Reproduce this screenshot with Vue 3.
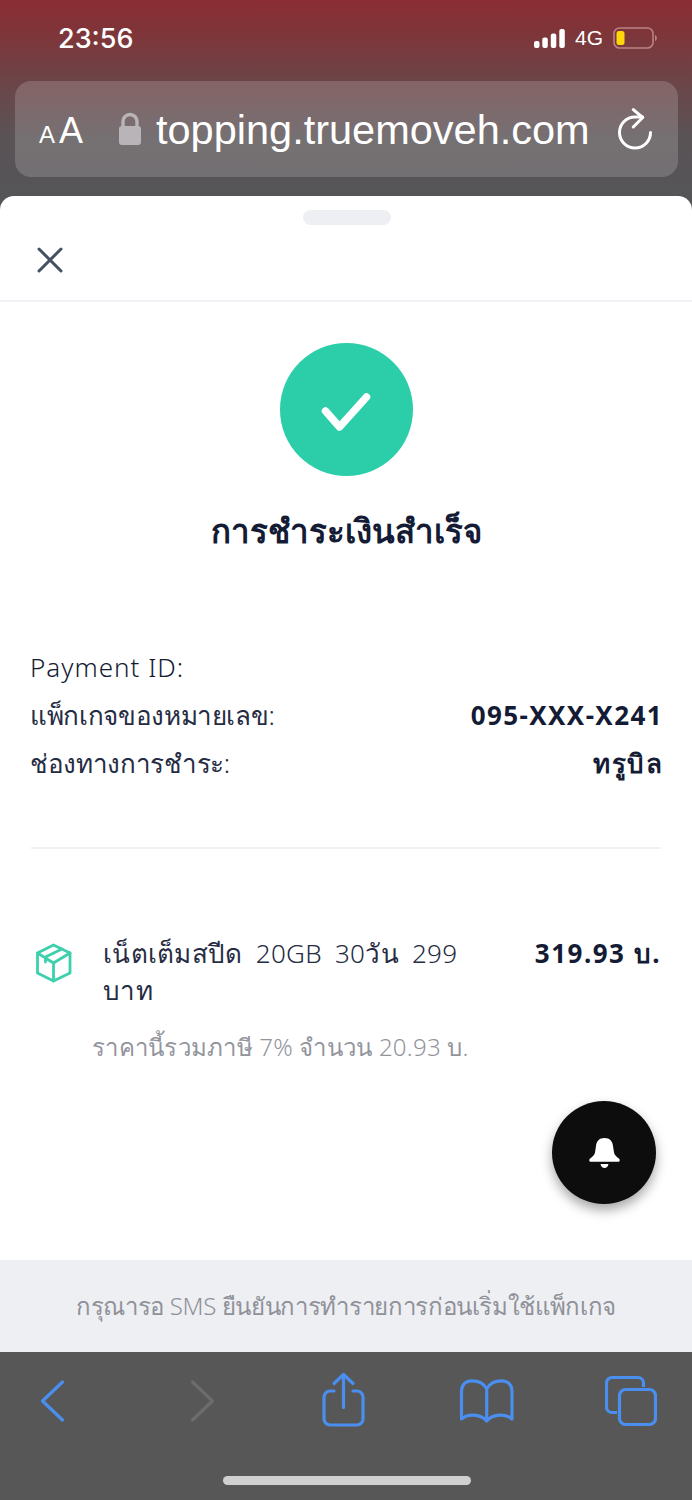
<script setup>
const rows = [
  { label: "Payment ID:", value: "" },
  { label: "แพ็กเกจของหมายเลข:", value: "095-XXX-X241", thai: true },
  { label: "ช่องทางการชำระ:", value: "ทรูบิล", thai: true },
];
</script>

<template>
  <div class="phone">
    <header class="top">
      <div class="status">
        <span class="time">23:56</span>
        <div class="status-right">
          <svg width="31" height="19" viewBox="0 0 31 19" fill="#fff">
            <rect x="0" y="12" width="5.500" height="7" rx="2" />
            <rect x="8.300" y="8.500" width="5.500" height="10.500" rx="2" />
            <rect x="16.800" y="4.500" width="5.500" height="14.500" rx="2" />
            <rect x="25.300" y="0" width="5.500" height="19" rx="2" />
          </svg>
          <span class="net">4G</span>
          <svg width="44" height="22" viewBox="0 0 44 22">
            <rect x="1" y="1" width="39" height="20" rx="5.500" fill="none" stroke="#b98286" stroke-width="1.600" />
            <rect x="3.500" y="4" width="8" height="14" rx="2.500" fill="#ffd60a" />
            <path d="M42 8c1.400.5 1.800 1.800 1.800 3s-.4 2.500-1.800 3z" fill="#b98286" />
          </svg>
        </div>
      </div>
      <div class="url-bar">
        <span class="aa"><small>A</small>A</span>
        <svg class="lock" width="24" height="34" viewBox="0 0 24 34">
          <path d="M5 15V9.500a7 7 0 0 1 14 0V15" fill="none" stroke="#b9b4b8" stroke-width="3.400" />
          <rect x="1" y="14" width="22" height="19" rx="3" fill="#b9b4b8" />
        </svg>
        <span class="url">topping.truemoveh.com</span>
        <svg class="reload" width="36" height="42" viewBox="0 0 36 42" fill="none" stroke="#fff" stroke-width="3" stroke-linecap="round" stroke-linejoin="round">
          <path d="M25.700 9H18A15.500 15.500 0 1 0 33.500 24.500" />
          <path d="M16.300 1.700L25.700 9.500 16.300 19" />
        </svg>
      </div>
    </header>

    <main class="sheet">
      <div class="handle"></div>
      <div class="sheet-head">
        <svg width="26" height="26" viewBox="0 0 26 26" fill="none" stroke="#475063" stroke-width="3" stroke-linecap="round">
          <path d="M2 2l22 22M24 2L2 24" />
        </svg>
      </div>

      <div class="body">
        <div class="check">
          <svg width="50" height="42" viewBox="0 0 50 42" fill="none" stroke="#fff" stroke-width="7.500" stroke-linecap="round" stroke-linejoin="round">
            <path d="M4.500 22l14 16L45.500 8" />
          </svg>
        </div>
        <h1 class="title">การชำระเงินสำเร็จ</h1>

        <div class="info">
          <div v-for="row in rows" :key="row.label" class="info-row">
            <span class="label" :class="{ thai: row.thai }">{{ row.label }}</span>
            <span class="value">{{ row.value }}</span>
          </div>
        </div>

        <div class="rule"></div>

        <div class="item">
          <svg class="box" width="36" height="40" viewBox="0 0 36 40" fill="none" stroke="#3ed0ad" stroke-width="2.800" stroke-linecap="round" stroke-linejoin="round">
            <path d="M17.500 2L34 10v20l-16.500 8-16-8V10z" />
            <path d="M1.500 10l16 10L34 10M17.500 20v18M26 6L9.500 14v5" />
          </svg>
          <div class="item-name">เน็ตเต็มสปีด 20GB 30วัน 299 บาท</div>
          <div class="item-price">319.93 บ.</div>
        </div>
        <p class="vat">ราคานี้รวมภาษี 7% จำนวน 20.93 บ.</p>

        <button class="fab">
          <svg width="31" height="32" viewBox="0 0 31 32" fill="#fff">
            <path d="M15.500 1C10 1 7.500 4.500 7 9L6 15.500C5.500 18.500 3 20 .8 21.800-.2 23 .3 24.800 1.500 24.800H29.500C30.700 24.800 31.200 23 30.200 21.800 28 20 25.500 18.500 25 15.500L24 9C23.500 4.500 21 1 15.500 1z" />
            <path d="M11.500 27h8c-.5 2.500-2 4-4 4s-3.500-1.500-4-4z" />
          </svg>
        </button>
      </div>

      <div class="notice">กรุณารอ SMS ยืนยันการทำรายการก่อนเริ่มใช้แพ็กเกจ</div>
    </main>

    <footer class="toolbar">
      <div class="tools">
        <svg width="26" height="44" viewBox="0 0 26 44" fill="none" stroke="#4a8fef" stroke-width="3.200" stroke-linecap="round" stroke-linejoin="round">
          <path d="M23.500 3L3.500 22l20 19" />
        </svg>
        <svg width="26" height="44" viewBox="0 0 26 44" fill="none" stroke="#6c6c6c" stroke-width="3.200" stroke-linecap="round" stroke-linejoin="round">
          <path d="M3.500 3l20 19-20 19" />
        </svg>
        <svg width="43" height="58" viewBox="0 0 43 58" fill="none" stroke="#4a8fef" stroke-width="3.200" stroke-linecap="round" stroke-linejoin="round">
          <path d="M12 19H8a6 6 0 0 0-6 6v22a6 6 0 0 0 6 6h27a6 6 0 0 0 6-6V25a6 6 0 0 0-6-6h-4" />
          <path d="M21.500 35.500V2.500M12 11.500l9.500-9 9.500 9" />
        </svg>
        <svg width="56" height="46" viewBox="0 0 56 46" fill="none" stroke="#4a8fef" stroke-width="3.200" stroke-linecap="round" stroke-linejoin="round">
          <path d="M27.700 11C25 5.500 19 2.800 13 2.800 6.500 2.800 2.500 7 2.500 13v28c5.500-5 18.500-6 25.200 2 6.800-8 19.800-7 25.300-2V13c0-6-4-10.200-10.500-10.200-6 0-12 2.700-14.800 8.200zM27.700 11v32" />
        </svg>
        <svg width="52" height="52" viewBox="0 0 52 52" fill="none" stroke="#4a8fef" stroke-width="3.200" stroke-linejoin="round">
          <path d="M12 37.500H7A5.500 5.500 0 0 1 1.500 32V8A5.500 5.500 0 0 1 7 2.500h26A5.500 5.500 0 0 1 38.500 8v4" />
          <rect x="14.500" y="14.500" width="36" height="35" rx="6" />
        </svg>
      </div>
      <div class="home-bar"></div>
    </footer>
  </div>
</template>

<style scoped>
.phone {
  width: 692px;
  height: 1500px;
  display: flex;
  flex-direction: column;
  overflow: hidden;
  font-family: "Noto Sans", "Open Sans", "DejaVu Sans", sans-serif;
  color: #141b34;
  background: #555;
}
.top {
  height: 196px;
  flex-shrink: 0;
  box-sizing: border-box;
  padding: 0 14px 0 15px;
  background: linear-gradient(180deg, #8a2e34 0%, #803438 15%, #6d4447 40%, #5a5356 70%, #555557 100%);
  color: #fff;
}
.status {
  height: 81px;
  display: flex;
  justify-content: space-between;
  align-items: center;
  padding: 0 21px 5px 43px;
  box-sizing: border-box;
}
.time {
  font: 500 27px "Inter", "Liberation Sans", sans-serif;
}
.status-right {
  display: flex;
  align-items: center;
  gap: 10px;
}
.net {
  font: 500 21px "Liberation Sans", sans-serif;
}
.url-bar {
  height: 96px;
  border-radius: 16px;
  background: rgba(255, 255, 255, 0.17);
  display: flex;
  align-items: center;
  padding: 0 25px 0 24px;
}
.aa {
  font: 400 36px "Liberation Sans", sans-serif;
  width: 79px;
  flex-shrink: 0;
  margin-top: 3px;
}
.aa small {
  font-size: 24px;
  margin-right: 4px;
}
.lock {
  flex-shrink: 0;
  margin-right: 14px;
}
.url {
  font: 400 41.500px "Liberation Sans", sans-serif;
  flex: 1;
  white-space: nowrap;
  margin-top: 2px;
}
.reload {
  flex-shrink: 0;
}
.sheet {
  flex: 1;
  background: #fff;
  border-radius: 14px 14px 0 0;
  display: flex;
  flex-direction: column;
  min-height: 0;
}
.handle {
  width: 88px;
  height: 15px;
  border-radius: 8px;
  background: #eeeff3;
  margin: 14px 0 0 303px;
}
.sheet-head {
  height: 77px;
  box-sizing: border-box;
  border-bottom: 2px solid #f0f1f4;
  padding: 22px 0 0 37px;
}
.body {
  flex: 1;
  position: relative;
  padding: 41px 31px 0;
}
.check {
  width: 133px;
  height: 133px;
  border-radius: 50%;
  background: #2bcea8;
  margin: 0 auto;
  display: flex;
  align-items: center;
  justify-content: center;
}
.title {
  margin: 31px 0 0;
  font-size: 33px;
  line-height: 48px;
  font-weight: 800;
  text-align: center;
}
.info {
  margin: 88px -2px 0 -1px;
  font-size: 26px;
}
.info-row {
  height: 48px;
  display: flex;
  align-items: center;
  justify-content: space-between;
}
.label {
  font-weight: 300;
  letter-spacing: 1px;
}
.label.thai {
  letter-spacing: -0.350px;
  color: #262c43;
}
.value {
  font-weight: 700;
  letter-spacing: 1.400px;
}
.rule {
  height: 2px;
  background: #f0f1f4;
  margin-top: 60px;
}
.item {
  margin-top: 86px;
  display: flex;
  align-items: flex-start;
  font-size: 26px;
  line-height: 37px;
}
.box {
  flex-shrink: 0;
  margin: 8px 31px 0 5px;
}
.item-name {
  flex: 1;
  font-weight: 300;
  letter-spacing: 0.300px;
  word-spacing: 6px;
  color: #262c43;
}
.item-price {
  flex-shrink: 0;
  width: 190px;
  text-align: right;
  font-weight: 700;
  letter-spacing: 1.500px;
}
.vat {
  margin: 20px 0 0 61px;
  font-size: 24px;
  line-height: 36px;
  font-weight: 300;
  letter-spacing: 0.250px;
  color: #93959d;
}
.fab {
  position: absolute;
  left: 552px;
  top: 799px;
  width: 104px;
  height: 103px;
  border: none;
  border-radius: 50%;
  padding: 0;
  background: #0d0d0d;
  box-shadow: 0 6px 12px rgba(0, 0, 0, 0.35);
  display: flex;
  align-items: center;
  justify-content: center;
}
.notice {
  height: 92px;
  flex-shrink: 0;
  background: #eeeff3;
  display: flex;
  align-items: center;
  justify-content: center;
  font-size: 24px;
  font-weight: 300;
  letter-spacing: -0.350px;
  color: #8f9199;
}
.toolbar {
  height: 148px;
  flex-shrink: 0;
  background: #575757;
}
.tools {
  height: 97px;
  padding-left: 39px;
  display: grid;
  grid-template-columns: 150px 133px 137px 146px 52px;
  align-items: center;
}
.home-bar {
  width: 248px;
  height: 9px;
  border-radius: 5px;
  background: #d0d0d0;
  margin: 27px 0 0 223px;
}
</style>
